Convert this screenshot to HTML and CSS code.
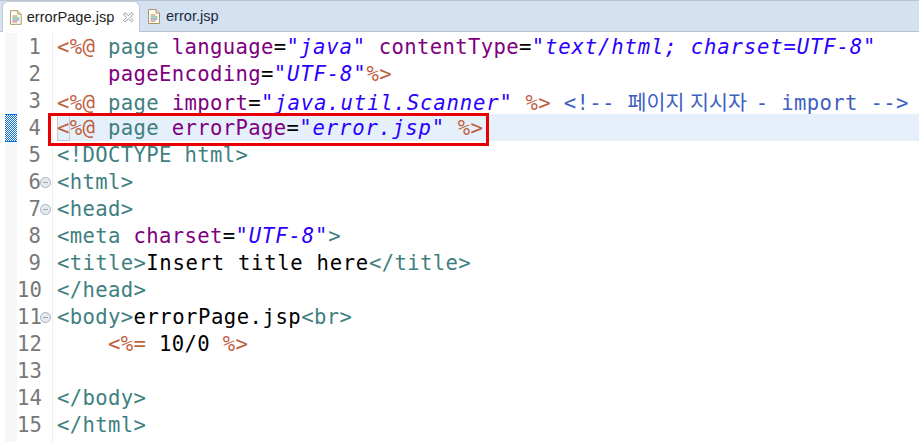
FILE: index.html
```html
<!DOCTYPE html>
<html lang="ko">
<head>
<meta charset="utf-8">
<title>errorPage.jsp</title>
<link rel="stylesheet" href="styles.css">
</head>
<body>
<div class="window">
  <div class="tabbar">
    <div class="tab active">
      <svg class="file-icon" viewBox="0 0 12 15" width="12" height="15"><path d="M.5.500h7.500l3.500 3.500v10.500h-11z" fill="#fdfcf5" stroke="#a8946a"/><path d="M8 .5v3.500h3.500" fill="#f0e6c8" stroke="#a8946a"/><path d="M2.500 6h5" stroke="#b9824f"/><path d="M2.500 8h7" stroke="#4da56a"/><path d="M2.500 10h7" stroke="#5a78c8"/><path d="M2.500 12h5" stroke="#d0605a"/></svg>
      <span class="tab-label">errorPage.jsp</span>
      <svg class="close-icon" viewBox="0 0 11 11" width="11" height="11"><path d="M.5 2l1.500-1.500 3.500 3 3.500-3 1.500 1.500-3 3.500 3 3-1.500 1.500-3.500-3-3.500 3-1.500-1.500 3-3z" fill="#fff" stroke="#8f959c"/></svg>
    </div>
    <div class="tab">
      <svg class="file-icon" viewBox="0 0 12 15" width="12" height="15"><path d="M.5.500h7.500l3.500 3.500v10.500h-11z" fill="#fdfcf5" stroke="#a8946a"/><path d="M8 .5v3.500h3.500" fill="#f0e6c8" stroke="#a8946a"/><path d="M2.500 6h5" stroke="#b9824f"/><path d="M2.500 8h7" stroke="#4da56a"/><path d="M2.500 10h7" stroke="#5a78c8"/><path d="M2.500 12h5" stroke="#d0605a"/></svg>
      <span class="tab-label">error.jsp</span>
    </div>
  </div>
  <div class="editor">
    <div class="marks">
      <svg class="mark" width="12" height="28" viewBox="0 0 12 28" shape-rendering="crispEdges">
        <defs><pattern id="checker" width="2" height="2" patternUnits="userSpaceOnUse"><rect width="2" height="2" fill="#fff"/><rect width="1" height="1" fill="#0a72dc"/><rect x="1" y="1" width="1" height="1" fill="#0a72dc"/></pattern></defs>
        <rect width="12" height="28" fill="url(#checker)"/>
        <rect width="12" height="1" fill="#0a72dc"/>
        <rect y="27" width="12" height="1" fill="#0a72dc"/>
      </svg>
    </div>
    <div class="gutter">
      <div class="num">1</div><div class="num">2</div><div class="num">3</div><div class="num">4</div><div class="num">5</div>
      <div class="num fold">6</div><div class="num fold">7</div><div class="num">8</div><div class="num">9</div><div class="num">10</div>
      <div class="num fold">11</div><div class="num">12</div><div class="num">13</div><div class="num">14</div><div class="num">15</div>
    </div>
    <div class="code">
      <div class="line"><span class="d">&lt;%@</span> <span class="t">page</span> <span class="a">language</span>=<span class="s">"java"</span> <span class="a">contentType</span>=<span class="s">"text/html; charset=UTF-8"</span></div>
      <div class="line">    <span class="a">pageEncoding</span>=<span class="s">"UTF-8"</span><span class="d">%&gt;</span></div>
      <div class="line"><span class="d">&lt;%@</span> <span class="t">page</span> <span class="a">import</span>=<span class="s">"java.util.Scanner"</span> <span class="d">%&gt;</span> <span class="c">&lt;!-- <span class="ko">페이지 지시자</span> - import --&gt;</span></div>
      <div class="line current"><span class="caret-box"><span class="d">&lt;</span></span><span class="d">%@</span> <span class="t">page</span> <span class="a">errorPage</span>=<span class="s">"error.jsp"</span> <span class="d">%&gt;</span><div class="highlight"></div></div>
      <div class="line"><span class="t">&lt;!DOCTYPE html&gt;</span></div>
      <div class="line"><span class="t">&lt;html&gt;</span></div>
      <div class="line"><span class="t">&lt;head&gt;</span></div>
      <div class="line"><span class="t">&lt;meta</span> <span class="a">charset</span>=<span class="s">"UTF-8"</span><span class="t">&gt;</span></div>
      <div class="line"><span class="t">&lt;title&gt;</span><span class="x">Insert title here</span><span class="t">&lt;/title&gt;</span></div>
      <div class="line"><span class="t">&lt;/head&gt;</span></div>
      <div class="line"><span class="t">&lt;body&gt;</span><span class="y">errorPage.jsp</span><span class="t">&lt;br&gt;</span></div>
      <div class="line">    <span class="d">&lt;%=</span> 10/0 <span class="d">%&gt;</span></div>
      <div class="line"> </div>
      <div class="line"><span class="t">&lt;/body&gt;</span></div>
      <div class="line"><span class="t">&lt;/html&gt;</span></div>
    </div>
  </div>
</div>
</body>
</html>
```
FILE: styles.css
```css
* { box-sizing: border-box; }
html, body { margin: 0; padding: 0; background: #fff; }
body { width: 919px; height: 442px; overflow: hidden; }
.window { display: flex; flex-direction: column; height: 442px; }
.tabbar {
  display: flex; align-items: flex-end; height: 32px; margin-bottom: 1px; padding-left: 2px; flex: none;
  background: #d3e1f0; border-top: 1px solid #bcc4d2; border-bottom: 1px solid #b8c2d0;
}
.tab {
  display: flex; align-items: center; height: 30px; padding: 0 4px 0 8px; gap: 6px;
  font: 14.6px "Liberation Sans", Arial, sans-serif; color: #1c2a3a;
}
.tab.active {
  background: #fff; border: 1px solid #c3cad6; border-bottom: none; border-radius: 6px 6px 0 0;
  width: 138px; height: 31px; margin-bottom: -1px; padding: 0 5px 0 7px; gap: 5px; color: #222;
}
.tab-label { white-space: nowrap; }
.close-icon { margin-left: 4px; }
.editor { display: flex; flex: 1; font: 20.6px/29px "DejaVu Sans Mono", monospace; }
.marks { width: 12px; margin-left: 5px; background: #f7f7f7; padding-top: 81px; flex: none; }
.mark { display: block; }
.gutter { width: 36px; flex: none; border-right: 1px solid #eceff2; text-align: right; color: #787878; }
.num { height: 27px; padding-right: 11px; position: relative; }
.fold::after {
  content: ""; position: absolute; right: 1px; top: 9px; width: 9px; height: 9px;
  border: 1px solid #a9b4bd; border-radius: 50%;
  background: linear-gradient(#9aa5ae, #9aa5ae) center / 5px 1px no-repeat #e6eaee;
}
.code { flex: 1; padding-left: 4px; letter-spacing: 0.35px; color: #000; }
.line { height: 27px; white-space: pre; position: relative; }
.current { background: #e6f0fb; }
.caret-box { display: inline-block; height: 27px; outline: 1px solid #c8c8c8; outline-offset: -1px; }
.highlight {
  position: absolute; left: -9px; top: -1px; width: 441px; height: 33px; border: 3px solid #e80000;
}
.d { color: #bf5f3f; }
.t { color: #3f7f7f; }
.a { color: #7f007f; }
.s { color: #2a00ff; font-style: italic; letter-spacing: 0.85px; }
.c { color: #3f5fbf; }
.x { letter-spacing: 0.7px; }
.y { letter-spacing: 0.5px; }
.ko { font-family: "Noto Sans CJK KR", sans-serif; letter-spacing: 0; margin-right: -4px; }
```
